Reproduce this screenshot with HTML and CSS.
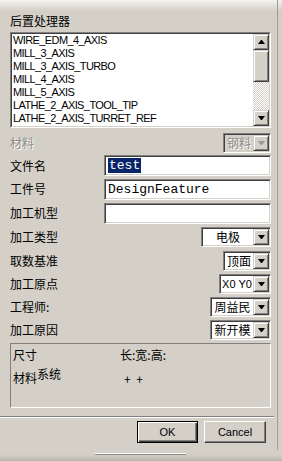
FILE: index.html
```html
<!DOCTYPE html>
<html lang="zh">
<head>
    <meta charset="UTF-8">
    <title>后置处理器</title>
    <link rel="stylesheet" href="styles.css">
</head>
<body>
    <div class="dlg">
        <div class="title">后置处理器</div>
        <div class="listbox">
            <div class="list-in">
                <ul class="items">
                    <li>WIRE_EDM_4_AXIS</li>
                    <li>MILL_3_AXIS</li>
                    <li>MILL_3_AXIS_TURBO</li>
                    <li>MILL_4_AXIS</li>
                    <li>MILL_5_AXIS</li>
                    <li>LATHE_2_AXIS_TOOL_TIP</li>
                    <li>LATHE_2_AXIS_TURRET_REF</li>
                    <li class="part">MILLTURN</li>
                </ul>
                <div class="vscroll">
                    <div class="raised sbtn"><i class="arr up"></i></div>
                    <div class="raised thumb"></div>
                    <div class="track"></div>
                    <div class="raised sbtn"><i class="arr"></i></div>
                </div>
            </div>
        </div>

        <div class="form">
            <div class="row h23">
                <span class="lbl off">材料</span>
                <div class="combo off w48"><span class="val">钢料</span><span class="raised drop"><i class="arr"></i></span></div>
            </div>
            <div class="row h23">
                <span class="lbl">文件名</span>
                <div class="field"><span class="sel">test</span></div>
            </div>
            <div class="row h24">
                <span class="lbl">工件号</span>
                <div class="field">DesignFeature</div>
            </div>
            <div class="row h24">
                <span class="lbl">加工机型</span>
                <div class="field"></div>
            </div>
            <div class="row h24">
                <span class="lbl">加工类型</span>
                <div class="combo w70"><span class="val">电极</span><span class="raised drop"><i class="arr"></i></span></div>
            </div>
            <div class="row h23">
                <span class="lbl">取数基准</span>
                <div class="combo w48"><span class="val">顶面</span><span class="raised drop"><i class="arr"></i></span></div>
            </div>
            <div class="row h23">
                <span class="lbl">加工原点</span>
                <div class="combo w52"><span class="val latin">X0 Y0</span><span class="raised drop"><i class="arr"></i></span></div>
            </div>
            <div class="row h23">
                <span class="lbl">工程师:</span>
                <div class="combo w61"><span class="val">周益民</span><span class="raised drop"><i class="arr"></i></span></div>
            </div>
            <div class="row h23">
                <span class="lbl">加工原因</span>
                <div class="combo w61"><span class="val">新开模</span><span class="raised drop"><i class="arr"></i></span></div>
            </div>
        </div>

        <div class="group">
            <div class="grow">
                <span class="gcol">尺寸</span>
                <span>长:宽:高:</span>
            </div>
            <div class="grow g2">
                <span class="gcol"><span class="lo">材料</span>系统</span>
                <span class="plus">+ +</span>
            </div>
        </div>

        <div class="sep"></div>

        <div class="btns">
            <button class="btn def"><span>OK</span></button>
            <button class="btn">Cancel</button>
        </div>
    </div>
    <div class="hbar"><div class="hthumb"></div></div>
</body>
</html>
```

FILE: styles.css
```css
body { margin: 0; width: 282px; height: 461px; overflow: hidden; background: linear-gradient(#f4f3ef, #d4d0c8 11px); font: 12px "Noto Sans CJK SC", sans-serif; color: #000; }
.dlg { width: 277px; height: 450px; border-right: 1px solid #a09d96; }
.title { padding: 12px 0 0 10px; height: 20px; line-height: 18px; }

.raised { box-sizing: border-box; border: 1px solid; border-color: #d4d0c8 #404040 #404040 #d4d0c8; box-shadow: inset 1px 1px #fff, inset -1px -1px #808080; background: #d4d0c8; }
.arr { display: block; width: 1px; height: 0; border-top: 4px solid #000; border-left: 3px solid transparent; border-right: 3px solid transparent; }
.arr.up { border-top: 0; border-bottom: 4px solid #000; }

.listbox { margin-left: 10px; width: 261px; height: 96px; box-sizing: border-box; border: 1px solid; border-color: #808080 #fff #fff #808080; }
.list-in { height: 100%; box-sizing: border-box; border: 1px solid; border-color: #404040 #d4d0c8 #d4d0c8 #404040; background: #fff; display: flex; overflow: hidden; }
.items { flex: 1; margin: 0; padding: 0 0 0 1px; list-style: none; font: 11px "Liberation Sans", Arial, sans-serif; letter-spacing: -0.6px; line-height: 13px; white-space: nowrap; overflow: hidden; }
.items .part { height: 1px; overflow: hidden; }
.vscroll { width: 16px; display: flex; flex-direction: column; }
.sbtn { height: 16px; display: flex; align-items: center; justify-content: center; }
.thumb { height: 32px; }
.track { flex: 1; background: repeating-conic-gradient(#fff 0 25%, #d4d0c8 0 50%) 0 0 / 2px 2px; }

.form { margin-top: 3px; }
.row { display: flex; align-items: center; justify-content: space-between; padding: 0 6px 0 10px; }
.h23 { height: 23px; }
.h24 { height: 24px; }
.lbl { line-height: 16px; }
.off { color: #8c8a86; text-shadow: 1px 1px 0 #fff; }

.field { width: 167px; height: 21px; box-sizing: border-box; border: 1px solid; border-color: #808080 #fff #fff #808080; box-shadow: inset 1px 1px #404040, inset -1px -1px #d4d0c8; background: #fff; padding: 2px 0 0 3px; font: 13px "Liberation Mono", "Courier New", monospace; line-height: 16px; }
.sel { background: #0a246a; color: #fff; padding: 0 1px; }

.combo { height: 20px; box-sizing: border-box; border: 1px solid; border-color: #808080 #fff #fff #808080; box-shadow: inset 1px 1px #404040, inset -1px -1px #d4d0c8; background: #fff; display: flex; padding: 1px; }
.combo .val { flex: 1; text-align: center; line-height: 16px; }
.combo .latin { font: 11px "Liberation Sans", Arial, sans-serif; line-height: 16px; }
.drop { width: 16px; height: 16px; display: flex; align-items: center; justify-content: center; }
.combo.off { background: #d4d0c8; }
.combo.off .arr { border-top-color: #9a9893; }
.w48 { width: 48px; }
.w52 { width: 52px; }
.w61 { width: 61px; }
.w70 { width: 70px; }

.group { margin: 2px 6px 0 10px; height: 65px; box-sizing: border-box; border: 1px solid; border-color: #808080 #fff #fff #808080; padding: 3px 0 0 2px; }
.grow { display: flex; line-height: 16px; }
.gcol { width: 107px; }
.g2 { margin-top: 3px; }
.lo { vertical-align: -4px; }
.plus { padding: 5px 0 0 4px; word-spacing: 3px; }

.sep { margin-top: 8px; width: 274px; border-top: 1px solid #808080; border-bottom: 1px solid #fff; }

.btns { display: flex; justify-content: flex-end; gap: 6px; padding: 3px 11px 0 0; }
.btn { width: 62px; height: 22px; margin: 0; padding: 0; box-sizing: border-box; border: 1px solid; border-color: #fff #404040 #404040 #fff; box-shadow: inset -1px -1px #808080, inset 1px 1px #d4d0c8; background: #d4d0c8; font: 11px "Liberation Sans", Arial, sans-serif; color: #000; }
.btn.def { width: 61px; border: 1px solid #000; box-shadow: inset 1px 1px #fff, inset -1px -1px #404040, inset -2px -2px #808080; }

.hbar { height: 11px; background: linear-gradient(#d4d0c8, #cfccc4 3px, #a9a7a2); }
.hthumb { margin: 3px 0 0 95px; width: 91px; height: 1px; background: #fff; border-bottom: 1px solid #8e8c87; }
```
